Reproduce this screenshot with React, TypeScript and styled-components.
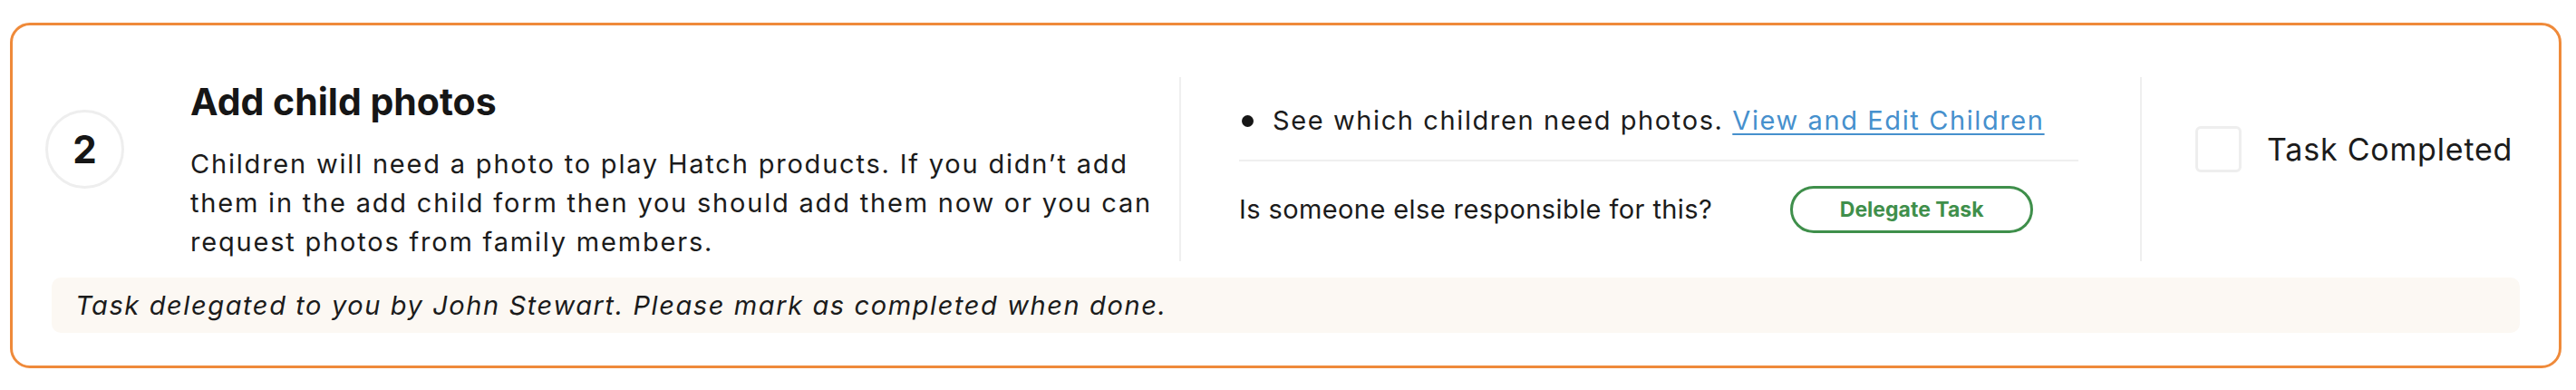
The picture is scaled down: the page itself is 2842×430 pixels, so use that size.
import React from "react";
import styled, { createGlobalStyle } from "styled-components";

const GlobalStyle = createGlobalStyle`
  html, body {
    margin: 0;
    padding: 0;
    background: #ffffff;
  }
  body {
    font-family: Inter, "Liberation Sans", sans-serif;
    color: #1b1b1b;
  }
`;

const Page = styled.div`
  padding: 25px 16px 24px 11px;
`;

const Card = styled.section`
  border: 3px solid #ef8a3a;
  border-radius: 22px;
  background: #ffffff;
  padding: 57px 0 36px;
  display: flex;
  flex-direction: column;
`;

const TopRow = styled.div`
  display: grid;
  grid-template-columns: 1fr 1060px 462px;
  min-height: 203px;
`;

const StepColumn = styled.div`
  display: flex;
  align-items: flex-start;
  padding: 36px 0 0 36px;
  gap: 73px;
  min-width: 0;
`;

const StepBadge = styled.div`
  flex: 0 0 auto;
  width: 81px;
  height: 81px;
  border: 3px solid #eeeeee;
  border-radius: 50%;
  display: flex;
  align-items: center;
  justify-content: center;
  font-family: Inter, sans-serif;
  font-weight: 700;
  font-size: 42px;
  color: #161616;
`;

const Intro = styled.div`
  flex: 1 1 auto;
  min-width: 0;
  display: flex;
  flex-direction: column;
  margin-top: -33px;
`;

const Title = styled.h2`
  margin: 0 0 22px;
  font-family: Inter, sans-serif;
  font-weight: 700;
  font-size: 41px;
  line-height: 49px;
  color: #161616;
`;

const BodyText = styled.p`
  margin: 0;
  font-family: Inter, sans-serif;
  font-size: 29px;
  line-height: 43px;
  letter-spacing: 1.8px;
  color: #1b1b1b;
`;

const ActionColumn = styled.div`
  border-left: 2px solid #efefef;
  padding: 27px 68px 0 64px;
  display: flex;
  flex-direction: column;
`;

const BulletRow = styled.div`
  display: flex;
  align-items: center;
  gap: 21px;
  padding-left: 3px;
  font-size: 29px;
  line-height: 42px;
  letter-spacing: 1.6px;
`;

const Bullet = styled.span`
  width: 13px;
  height: 13px;
  border-radius: 50%;
  background: #161616;
  flex: 0 0 auto;
`;

const TaskLink = styled.a`
  color: #4690cd;
  text-decoration: underline;
  text-underline-offset: 4px;
  text-decoration-thickness: 2px;
  cursor: pointer;
`;

const Rule = styled.hr`
  margin: 22px 0 0;
  border: 0;
  height: 2px;
  background: #efefef;
`;

const DelegateRow = styled.div`
  display: flex;
  align-items: center;
  gap: 86px;
  padding-top: 27px;
`;

const Question = styled.span`
  font-size: 29px;
  line-height: 42px;
  letter-spacing: 0.4px;
  white-space: nowrap;
`;

const OutlineButton = styled.button`
  flex: 0 0 auto;
  width: 268px;
  height: 52px;
  border: 3px solid #3f8f4b;
  border-radius: 26px;
  background: #ffffff;
  color: #3f8f4b;
  font-family: Inter, sans-serif;
  font-weight: 700;
  font-size: 23px;
  cursor: pointer;
`;

const CompleteColumn = styled.div`
  border-left: 2px solid #efefef;
  padding: 54px 0 0 59px;
`;

const CheckLabel = styled.label`
  display: flex;
  align-items: center;
  gap: 28px;
  font-size: 34px;
  letter-spacing: 0.8px;
  color: #1b1b1b;
  cursor: pointer;
`;

const CheckBox = styled.span`
  width: 45px;
  height: 45px;
  border: 3px solid #eeeeee;
  border-radius: 6px;
  flex: 0 0 auto;
`;

const Notice = styled.div`
  margin: 18px 43px 0;
  height: 61px;
  border-radius: 10px;
  background: #fcf8f3;
  display: flex;
  align-items: center;
  padding: 0 26px;
  font-style: italic;
  font-size: 29px;
  letter-spacing: 1.6px;
  color: #1b1b1b;
`;

export default function App() {
  return (
    <>
      <GlobalStyle />
      <Page>
        <Card>
          <TopRow>
            <StepColumn>
              <StepBadge>2</StepBadge>
              <Intro>
                <Title>Add child photos</Title>
                <BodyText>
                  Children will need a photo to play Hatch products. If you didn’t add them in the
                  add child form then you should add them now or you can request photos from
                  family members.
                </BodyText>
              </Intro>
            </StepColumn>
            <ActionColumn>
              <BulletRow>
                <Bullet />
                <span>
                  See which children need photos. <TaskLink>View and Edit Children</TaskLink>
                </span>
              </BulletRow>
              <Rule />
              <DelegateRow>
                <Question>Is someone else responsible for this?</Question>
                <OutlineButton>Delegate Task</OutlineButton>
              </DelegateRow>
            </ActionColumn>
            <CompleteColumn>
              <CheckLabel>
                <CheckBox />
                Task Completed
              </CheckLabel>
            </CompleteColumn>
          </TopRow>
          <Notice>Task delegated to you by John Stewart. Please mark as completed when done.</Notice>
        </Card>
      </Page>
    </>
  );
}
